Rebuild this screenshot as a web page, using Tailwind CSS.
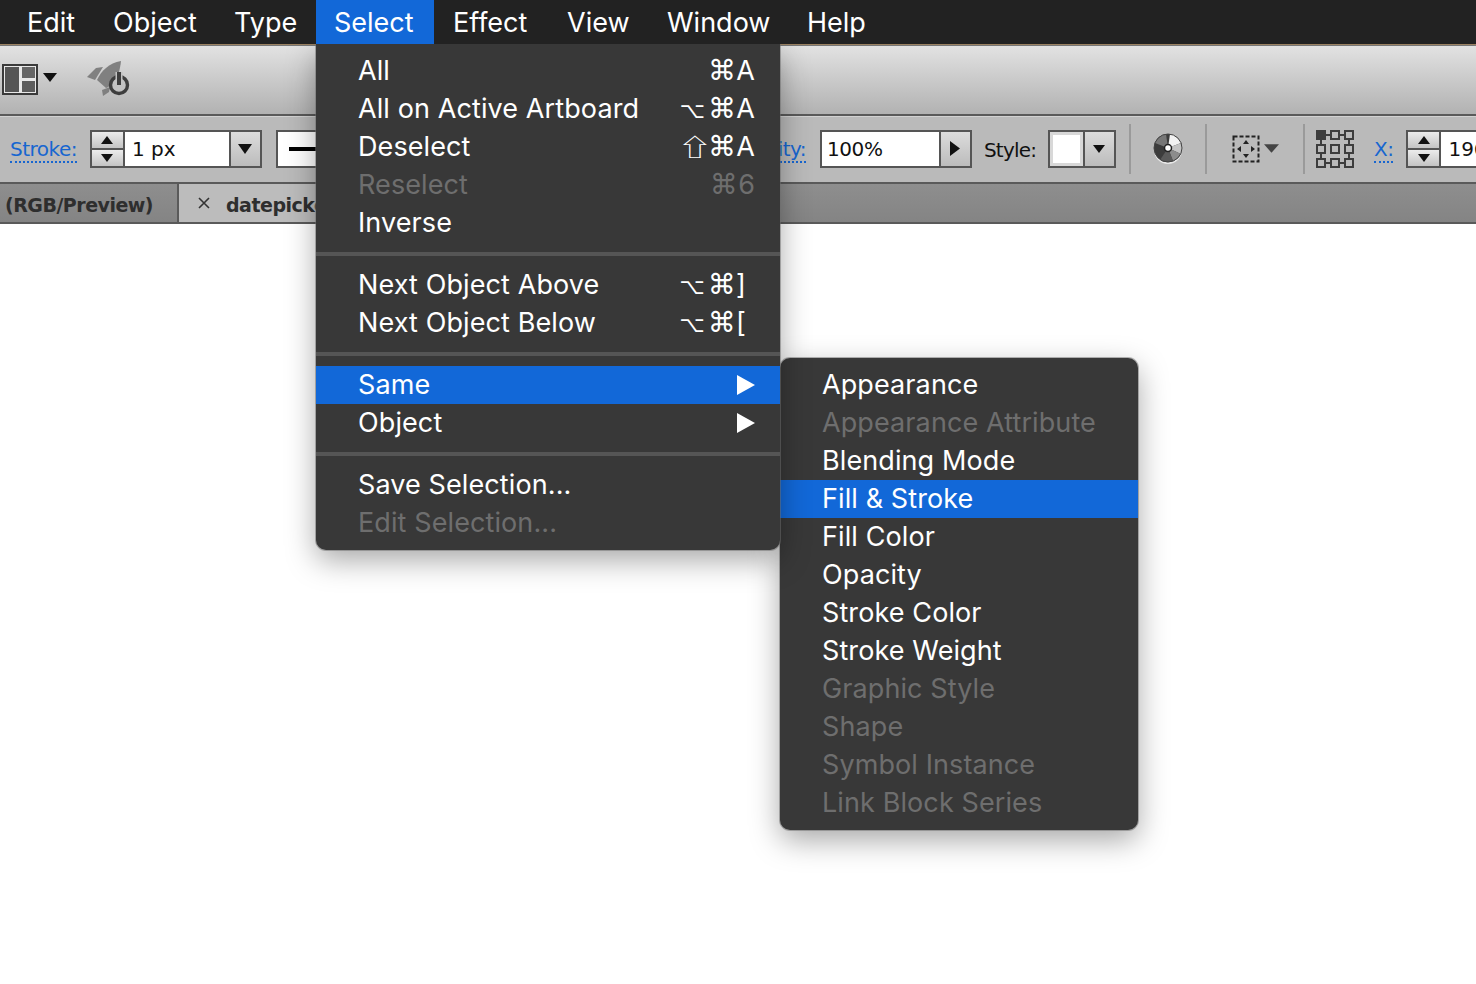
<!DOCTYPE html>
<html><head><meta charset="utf-8"><script src="https://cdn.jsdelivr.net/npm/@tailwindcss/browser@4"></script></head>
<body class="bg-white overflow-hidden">
<div class="relative w-[1476px] h-[984px] overflow-hidden bg-white font-['DejaVu_Sans',sans-serif]">

<!-- menubar -->
<div class="relative z-30 h-[44px] bg-[#222222] flex items-stretch pl-[8px] text-[27px] text-white font-['Inter',sans-serif] leading-[46px]">
  <div class="w-[87px] pl-[19px]">Edit</div>
  <div class="w-[122px] pl-[18px]">Object</div>
  <div class="w-[99px] pl-[17px]">Type</div>
  <div class="w-[118px] pl-[18px] bg-[#1268d8]">Select</div>
  <div class="w-[114px] pl-[19px]">Effect</div>
  <div class="w-[100px] pl-[19px]">View</div>
  <div class="w-[140px] pl-[19px]">Window</div>
  <div class="pl-[19px]">Help</div>
</div>
<div class="h-[1px] bg-[#9b8262]"></div>
<div class="h-[1px] bg-[#777]"></div>

<!-- toolbar 1 -->
<div class="h-[68px] bg-gradient-to-b from-[#e2e2e2] to-[#b2b2b2] flex items-center pl-[2px] pb-[2px]">
  <svg width="36" height="31" viewBox="0 0 36 31"><rect x="1" y="1" width="34" height="29" fill="#e8e8e8" stroke="#3a3a3a" stroke-width="2"/><rect x="3" y="3" width="14" height="25" fill="#555"/><rect x="20" y="3" width="13" height="11" fill="#666"/><rect x="20" y="17" width="13" height="11" fill="#5c5c5c"/></svg>
  <svg class="ml-[5px] mt-[-3px]" width="14" height="10" viewBox="0 0 14 10"><path d="M0 0H14L7 9Z" fill="#111"/></svg>
  <svg class="ml-[30px]" width="46" height="36" viewBox="0 0 46 36"><path d="M0 16L9 7L16 6L8 19Z" fill="#808080"/><path d="M34 0C22 2 14 10 10 19L19 27C26 24 32 18 34 0Z" fill="#808080"/><path d="M16 35L15 29L23 26L22 31Z" fill="#808080"/><circle cx="32" cy="24" r="8.5" fill="#c2c2c2" stroke="#3e3e3e" stroke-width="3.4"/><rect x="28.5" y="11" width="7" height="9" fill="#c2c2c2"/><rect x="30" y="11" width="4" height="13" fill="#3e3e3e"/></svg>
</div>
<div class="h-[2px] bg-[#5a5a5a]"></div>
<div class="h-[1px] bg-[#d2d2d2]"></div>

<!-- toolbar 2 -->
<div class="h-[65px] bg-[#bababa] flex items-center text-[20px] text-[#111] pb-[2px]">
  <span class="shrink-0 ml-[10px] mt-[2px] text-[#1766d0] border-b-2 border-dotted border-[#1766d0] leading-[24px] text-[20px] tracking-[-0.5px]">Stroke:</span>
  <!-- spinner -->
  <div class="shrink-0 ml-[13px] flex border-2 border-[#555] h-[38px] bg-white w-[172px]">
    <div class="w-[33px] flex flex-col border-r-2 border-[#555]">
      <div class="h-[17px] bg-gradient-to-b from-[#ececec] to-[#c4c4c4] border-b border-[#555] flex items-center justify-center"><svg width="12" height="8"><path d="M6 0L12 8H0Z" fill="#111"/></svg></div>
      <div class="flex-1 bg-gradient-to-b from-[#ececec] to-[#c4c4c4] border-t border-[#555] flex items-center justify-center"><svg width="12" height="8"><path d="M0 0H12L6 8Z" fill="#111"/></svg></div>
    </div>
    <div class="flex-1 pl-[7px] leading-[34px] text-[20px]">1 px</div>
    <div class="w-[31px] border-l-2 border-[#555] bg-gradient-to-b from-[#dcdcdc] to-[#bcbcbc] flex items-center justify-center"><svg width="14" height="10"><path d="M0 0H14L7 10Z" fill="#111"/></svg></div>
  </div>
  <div class="shrink-0 ml-[14px] w-[120px] h-[38px] border-2 border-[#555] bg-white flex items-center pl-[11px]"><div class="h-[4px] w-[90px] bg-black"></div></div>
  <span class="shrink-0 ml-[295px] w-[115px] mt-[2px] text-right text-[#1766d0] leading-[24px] text-[20px] border-b-2 border-dotted border-[#1766d0] tracking-[-0.6px]">Opacity:</span>
  <div class="shrink-0 ml-[14px] flex border-2 border-[#555] h-[38px] w-[152px] bg-white">
    <div class="flex-1 pl-[5px] leading-[34px] text-[20px] tracking-[-0.4px]">100%</div>
    <div class="w-[31px] border-l-2 border-[#555] bg-gradient-to-b from-[#dcdcdc] to-[#bcbcbc] flex items-center justify-center"><svg width="10" height="15"><path d="M0 0V15L10 7.5Z" fill="#111"/></svg></div>
  </div>
  <span class="shrink-0 w-[52px] ml-[12px] mt-[2px] leading-[24px] text-[20px] tracking-[-0.8px]">Style:</span>
  <div class="shrink-0 ml-[12px] flex border-2 border-[#555] h-[38px] w-[68px]">
    <div class="flex-1 border-[3px] border-[#d8d8d8] bg-white"></div>
    <div class="w-[31px] border-l-2 border-[#555] bg-gradient-to-b from-[#dcdcdc] to-[#bcbcbc] flex items-center justify-center"><svg width="12" height="8"><path d="M0 0H12L6 8Z" fill="#111"/></svg></div>
  </div>
  <div class="shrink-0 ml-[13px] w-[2px] h-[50px] bg-[#9a9a9a]"></div>
  <svg class="shrink-0 ml-[22px]" width="30" height="32" viewBox="0 0 30 32"><circle cx="15" cy="17" r="14" fill="#e8e8e8"/><circle cx="15" cy="15" r="14" fill="#3c3c3c"/><path d="M15 15L17 1A14 14 0 0 1 28 10Z" fill="#f2f2f2"/><path d="M15 15L28 10A14 14 0 0 1 28 21Z" fill="#c4c4c4"/><path d="M15 15L28 21A14 14 0 0 1 20 28Z" fill="#8c8c8c"/><path d="M15 15L20 28A14 14 0 0 1 7 27Z" fill="#5a5a5a"/><path d="M15 15L2 10A14 14 0 0 1 13 1Z" fill="#777"/><circle cx="15" cy="15" r="14" fill="none" stroke="#444" stroke-width="1"/><circle cx="15" cy="15" r="3.5" fill="#fff" stroke="#222" stroke-width="1.5"/></svg>
  <div class="shrink-0 ml-[22px] w-[2px] h-[50px] bg-[#9a9a9a]"></div>
  <svg class="shrink-0 ml-[25px]" width="28" height="28" viewBox="0 0 28 28"><rect x="1.5" y="1.5" width="25" height="25" fill="none" stroke="#222" stroke-width="2" stroke-dasharray="4 2"/><path d="M14 5L17 9H11Z M14 23L11 19H17Z M5 14L9 11V17Z M23 14L19 17V11Z" fill="#222"/></svg>
  <svg class="shrink-0 ml-[4px]" width="15" height="9" viewBox="0 0 16 9"><path d="M0 0H16L8 9Z" fill="#444"/></svg>
  <div class="shrink-0 ml-[24px] w-[2px] h-[50px] bg-[#9a9a9a]"></div>
  <svg class="shrink-0 ml-[11px]" width="38" height="38" viewBox="0 0 38 38"><g fill="none" stroke="#3d3d3d" stroke-width="2"><path d="M9 5H15M23 5H29M9 33H15M23 33H29M5 9V15M5 23V29M33 9V15M33 23V29"/><rect x="15" y="1" width="8" height="8"/><rect x="29" y="1" width="8" height="8"/><rect x="1" y="15" width="8" height="8"/><rect x="15" y="15" width="8" height="8"/><rect x="29" y="15" width="8" height="8"/><rect x="1" y="29" width="8" height="8"/><rect x="15" y="29" width="8" height="8"/><rect x="29" y="29" width="8" height="8"/></g><rect x="0" y="0" width="10" height="10" fill="#3d3d3d"/></svg>
  <span class="shrink-0 ml-[20px] mt-[2px] text-[#1766d0] leading-[24px] border-b-2 border-dotted border-[#1766d0] text-[20px] tracking-[-0.5px]">X:</span>
  <div class="ml-[13px] flex border-2 border-[#555] h-[38px] bg-white w-[100px] shrink-0">
    <div class="w-[33px] flex flex-col border-r-2 border-[#555]">
      <div class="h-[17px] bg-gradient-to-b from-[#ececec] to-[#c4c4c4] border-b border-[#555] flex items-center justify-center"><svg width="12" height="8"><path d="M6 0L12 8H0Z" fill="#111"/></svg></div>
      <div class="flex-1 bg-gradient-to-b from-[#ececec] to-[#c4c4c4] border-t border-[#555] flex items-center justify-center"><svg width="12" height="8"><path d="M0 0H12L6 8Z" fill="#111"/></svg></div>
    </div>
    <div class="flex-1 pl-[7px] leading-[34px] text-[20px]">196</div>
  </div>
</div>
<div class="h-[2px] bg-[#5a5a5a]"></div>

<!-- tab bar -->
<div class="h-[38px] bg-gradient-to-b from-[#8e8e8e] to-[#848484] flex text-[19px] font-bold text-[#2e2e2e] leading-[38px]">
  <div class="w-[177px] pl-[5px] pt-[2px] whitespace-nowrap tracking-[-0.5px]">(RGB/Preview)</div>
  <div class="w-[2px] bg-[#5a5a5a]"></div>
  <div class="w-[300px] bg-[#bcbcbc] flex items-center">
    <svg class="ml-[19px]" width="12" height="12" viewBox="0 0 12 12"><path d="M1 1L11 11M11 1L1 11" stroke="#333" stroke-width="1.6"/></svg>
    <span class="ml-[16px] pt-[4px] tracking-[-0.5px]">datepicker</span>
  </div>
</div>
<div class="h-[2px] bg-[#5a5a5a]"></div>

<!-- main menu -->
<div class="absolute z-20 left-[316px] top-[44px] w-[464px] h-[506px] bg-[#383838] rounded-b-[10px] shadow-[0_0_0_1px_rgba(110,110,110,0.5),0_10px_30px_rgba(0,0,0,0.35)] pt-[8px] text-[27px] tracking-[0.1px] text-white font-['Inter',sans-serif] leading-[38px]">
  <div class="flex justify-between pl-[42px] pr-[25px]"><span>All</span><span><span class="font-['DejaVu_Sans'] text-[28px] leading-[28px]">⌘</span>A</span></div>
  <div class="flex justify-between pl-[42px] pr-[25px]"><span>All on Active Artboard</span><span><span class="font-['DejaVu_Sans'] text-[22px] leading-[22px] mr-[3px]">⌥</span><span class="font-['DejaVu_Sans'] text-[28px] leading-[28px]">⌘</span>A</span></div>
  <div class="flex justify-between pl-[42px] pr-[25px]"><span>Deselect</span><span><span class="inline-block scale-x-[1.45] font-['Noto_Sans_CJK_JP','DejaVu_Sans'] text-[24px] leading-[24px] mr-[1px]">⇧</span><span class="font-['DejaVu_Sans'] text-[28px] leading-[28px]">⌘</span>A</span></div>
  <div class="flex justify-between pl-[42px] pr-[25px] text-[#6e6e6e]"><span>Reselect</span><span><span class="font-['DejaVu_Sans'] text-[28px] leading-[28px]">⌘</span>6</span></div>
  <div class="pl-[42px]">Inverse</div>
  <div class="h-[4px] bg-[#555] mt-[10px] mb-[10px]"></div>
  <div class="flex justify-between pl-[42px] pr-[34px]"><span>Next Object Above</span><span><span class="font-['DejaVu_Sans'] text-[22px] leading-[22px] mr-[3px]">⌥</span><span class="font-['DejaVu_Sans'] text-[28px] leading-[28px]">⌘</span>]</span></div>
  <div class="flex justify-between pl-[42px] pr-[34px]"><span>Next Object Below</span><span><span class="font-['DejaVu_Sans'] text-[22px] leading-[22px] mr-[3px]">⌥</span><span class="font-['DejaVu_Sans'] text-[28px] leading-[28px]">⌘</span>[</span></div>
  <div class="h-[4px] bg-[#555] mt-[10px] mb-[10px]"></div>
  <div class="flex justify-between items-center pl-[42px] pr-[25px] bg-[#1268d8]"><span>Same</span><svg width="18" height="20"><path d="M0 0V20L18 10Z" fill="#fff"/></svg></div>
  <div class="flex justify-between items-center pl-[42px] pr-[25px]"><span>Object</span><svg width="18" height="20"><path d="M0 0V20L18 10Z" fill="#fff"/></svg></div>
  <div class="h-[4px] bg-[#555] mt-[10px] mb-[10px]"></div>
  <div class="pl-[42px]">Save Selection...</div>
  <div class="pl-[42px] text-[#6e6e6e]">Edit Selection...</div>
</div>

<!-- submenu -->
<div class="absolute z-10 left-[780px] top-[358px] w-[358px] h-[472px] bg-[#383838] rounded-[10px] shadow-[0_0_0_1px_rgba(110,110,110,0.5),0_10px_30px_rgba(0,0,0,0.35)] pt-[8px] text-[27px] tracking-[0.1px] text-white font-['Inter',sans-serif] leading-[38px]">
  <div class="pl-[42px]">Appearance</div>
  <div class="pl-[42px] text-[#6e6e6e]">Appearance Attribute</div>
  <div class="pl-[42px]">Blending Mode</div>
  <div class="pl-[42px] bg-[#1268d8]">Fill &amp; Stroke</div>
  <div class="pl-[42px]">Fill Color</div>
  <div class="pl-[42px]">Opacity</div>
  <div class="pl-[42px]">Stroke Color</div>
  <div class="pl-[42px]">Stroke Weight</div>
  <div class="pl-[42px] text-[#6e6e6e]">Graphic Style</div>
  <div class="pl-[42px] text-[#6e6e6e]">Shape</div>
  <div class="pl-[42px] text-[#6e6e6e]">Symbol Instance</div>
  <div class="pl-[42px] text-[#6e6e6e]">Link Block Series</div>
</div>
</div>
</body></html>
